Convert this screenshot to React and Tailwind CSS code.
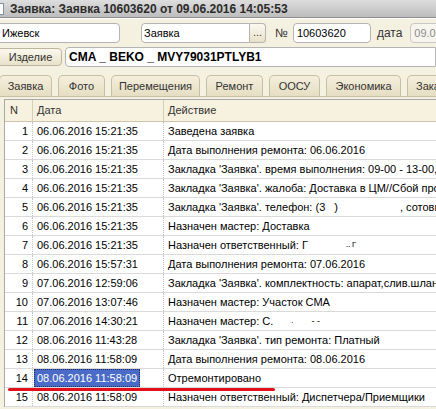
import React from "react";

const rows = [
  ["1", "06.06.2016 15:21:35", <>Заведена заявка</>],
  ["2", "06.06.2016 15:21:35", <>Дата выполнения ремонта: 06.06.2016</>],
  ["3", "06.06.2016 15:21:35", <>Закладка 'Заявка'. время выполнения: 09-00 - 13-00, время</>],
  ["4", "06.06.2016 15:21:35", <>Закладка 'Заявка'. жалоба: Доставка в ЦМ//Сбой программы</>],
  ["5", "06.06.2016 15:21:35", <>Закладка 'Заявка'. телефон: (3<span className="ml-[9px]">)</span><span className="ml-[62px]">, сотовый</span></>],
  ["6", "06.06.2016 15:21:35", <>Назначен мастер: Доставка</>],
  ["7", "06.06.2016 15:21:35", <>Назначен ответственный: Г<span className="ml-[38px] text-[8px] align-top">‥ Г</span></>],
  ["8", "06.06.2016 15:57:31", <>Дата выполнения ремонта: 07.06.2016</>],
  ["9", "07.06.2016 12:59:06", <>Закладка 'Заявка'. комплектность: апарат,слив.шланг</>],
  ["10", "07.06.2016 13:07:46", <>Назначен мастер: Участок СМА</>],
  ["11", "07.06.2016 14:30:21", <>Назначен мастер: С.<span className="ml-[18px] text-[8px]">.</span><span className="ml-[18px] text-[9px] align-top">- -</span></>],
  ["12", "08.06.2016 11:43:28", <>Закладка 'Заявка'. тип ремонта: Платный</>],
  ["13", "08.06.2016 11:58:09", <>Дата выполнения ремонта: 08.06.2016</>],
  ["14", "08.06.2016 11:58:09", <>Отремонтировано</>],
  ["15", "08.06.2016 11:58:09", <>Назначен ответственный: Диспетчера/Приемщики</>],
];

const tabs = [
  ["Заявка", "w-[53px] ml-[-1px] justify-center"],
  ["Фото", "w-[47px] justify-center"],
  ["Перемещения", "w-[89px] justify-center"],
  ["Ремонт", "w-[57px] justify-center"],
  ["ООСУ", "w-[51px] justify-center"],
  ["Экономика", "w-[75px] justify-center"],
  ["Заказ", "w-[60px] justify-start pl-[8px]"],
];

export default function App() {
  return (
    <div className="relative w-[436px] h-[409px] overflow-hidden bg-[#f5f1e1] text-[11px] leading-none text-black font-['Liberation_Sans',Arial,sans-serif]">
      {/* title bar */}
      <div className="h-[18px] flex items-center bg-gradient-to-b from-[#dedede] via-[#cdcdcd] to-[#bdbdbd] border-b border-[#8e8e8e]">
        <div className="w-[4px] h-[12px] bg-white border border-[#8090a8] border-l-0" />
        <span className="ml-[6px] font-bold text-[12px] text-[#2a2a2a] whitespace-nowrap">
          Заявка: Заявка 10603620 от 09.06.2016 14:05:53
        </span>
      </div>
      <div className="h-px bg-white" />

      {/* row 2 */}
      <div className="mt-[4px] flex items-center h-[20px] whitespace-nowrap">
        <div className="shrink-0 ml-[-5px] w-[125px] h-[20px] bg-white border border-[#b4b4b4] rounded-[4px] flex items-center pl-[6px]">
          Ижевск
        </div>
        <div className="shrink-0 ml-[21px] flex h-[20px]">
          <div className="w-[109px] h-[20px] bg-white border border-[#b4b4b4] rounded-l-[4px] flex items-center pl-[2px]">
            Заявка
          </div>
          <div className="w-[16px] h-[20px] bg-gradient-to-b from-[#fbf9f1] to-[#e8e1c9] border border-l-0 border-[#b4b4b4] rounded-r-[4px] flex items-end justify-center pb-[4px] text-[#444]">
            ...
          </div>
        </div>
        <span className="shrink-0 ml-[9px] text-[12px] text-[#333]">№</span>
        <div className="shrink-0 ml-[5px] w-[78px] h-[20px] bg-white border border-[#b4b4b4] rounded-[4px] flex items-center pl-[3px]">
          10603620
        </div>
        <span className="shrink-0 ml-[6px] text-[12px] text-[#333]">дата</span>
        <div className="shrink-0 ml-[8px] w-[80px] h-[20px] bg-[#f7f5ee] border border-[#c8c8c8] rounded-[4px] flex items-center pl-[3px] text-[#8c8c8c]">
          09.06.2016
        </div>
      </div>

      {/* row 3 */}
      <div className="mt-[4px] flex items-center h-[20px] whitespace-nowrap">
        <div className="shrink-0 ml-[-3px] w-[65px] h-[18px] bg-gradient-to-b from-[#fbf8ee] to-[#e9e2ca] border border-[#bdb69e] rounded-[4px] flex items-center justify-center pl-[2px] text-[#333]">
          Изделие
        </div>
        <div className="ml-[3px] flex-1 h-[20px] bg-white border border-[#b4b4b4] rounded-l-[4px] flex items-center pl-[3px] font-bold text-[12px]">
          CMA _ BEKO _ MVY79031PTLYB1
        </div>
      </div>

      {/* tabs */}
      <div className="mt-[8px] h-[22px] flex items-end gap-[6px] whitespace-nowrap border-b border-[#c7bfa3]">
        {tabs.map(([t, w]) => (
          <div
            key={t}
            className={`${w} shrink-0 h-[21px] bg-gradient-to-b from-[#f4efdc] to-[#e6dec3] border border-b-0 border-[#c7bfa3] rounded-t-[5px] flex items-center text-[#333]`}
          >
            {t}
          </div>
        ))}
      </div>

      {/* grid */}
      <div className="mt-[2px] ml-[4px] bg-white border-l border-t border-[#a8a8a8]">
        <div className="h-[22px] flex items-center bg-[#f7f2df] border-b border-[#cdc5ab] text-[#333]">
          <div className="w-[28px] h-full flex items-center pl-[5px] border-r border-[#d6cfb8]">N</div>
          <div className="w-[131px] h-full flex items-center pl-[4px] border-r border-[#d6cfb8]">Дата</div>
          <div className="flex-1 h-full flex items-center pl-[4px]">Действие</div>
        </div>
        {rows.map(([n, d, a]) => (
          <div key={n} className="h-[19px] flex items-center border-b border-[#dadada] whitespace-nowrap">
            <div className="shrink-0 w-[28px] h-full flex items-center justify-end pr-[4px] border-r border-dotted border-[#c4c4c4]">
              {n}
            </div>
            <div className="shrink-0 w-[131px] h-full flex items-center pl-[1px] border-r border-dotted border-[#c4c4c4]">
              {n === "14" ? (
                <span className="h-[18px] flex items-center px-[3px] bg-[#4a6cc8] text-white outline outline-1 outline-dotted outline-[#1c2e66] -outline-offset-1">
                  {d}
                </span>
              ) : (
                <span className="px-[3px]">{d}</span>
              )}
            </div>
            <div className="flex-1 h-full flex items-center pl-[4px] overflow-hidden">{a}</div>
          </div>
        ))}
      </div>

      {/* red annotation line */}
      <div className="absolute left-[8px] top-[388px] w-[267px] h-[3px] bg-[#e3101a] rounded-full" />
    </div>
  );
}
